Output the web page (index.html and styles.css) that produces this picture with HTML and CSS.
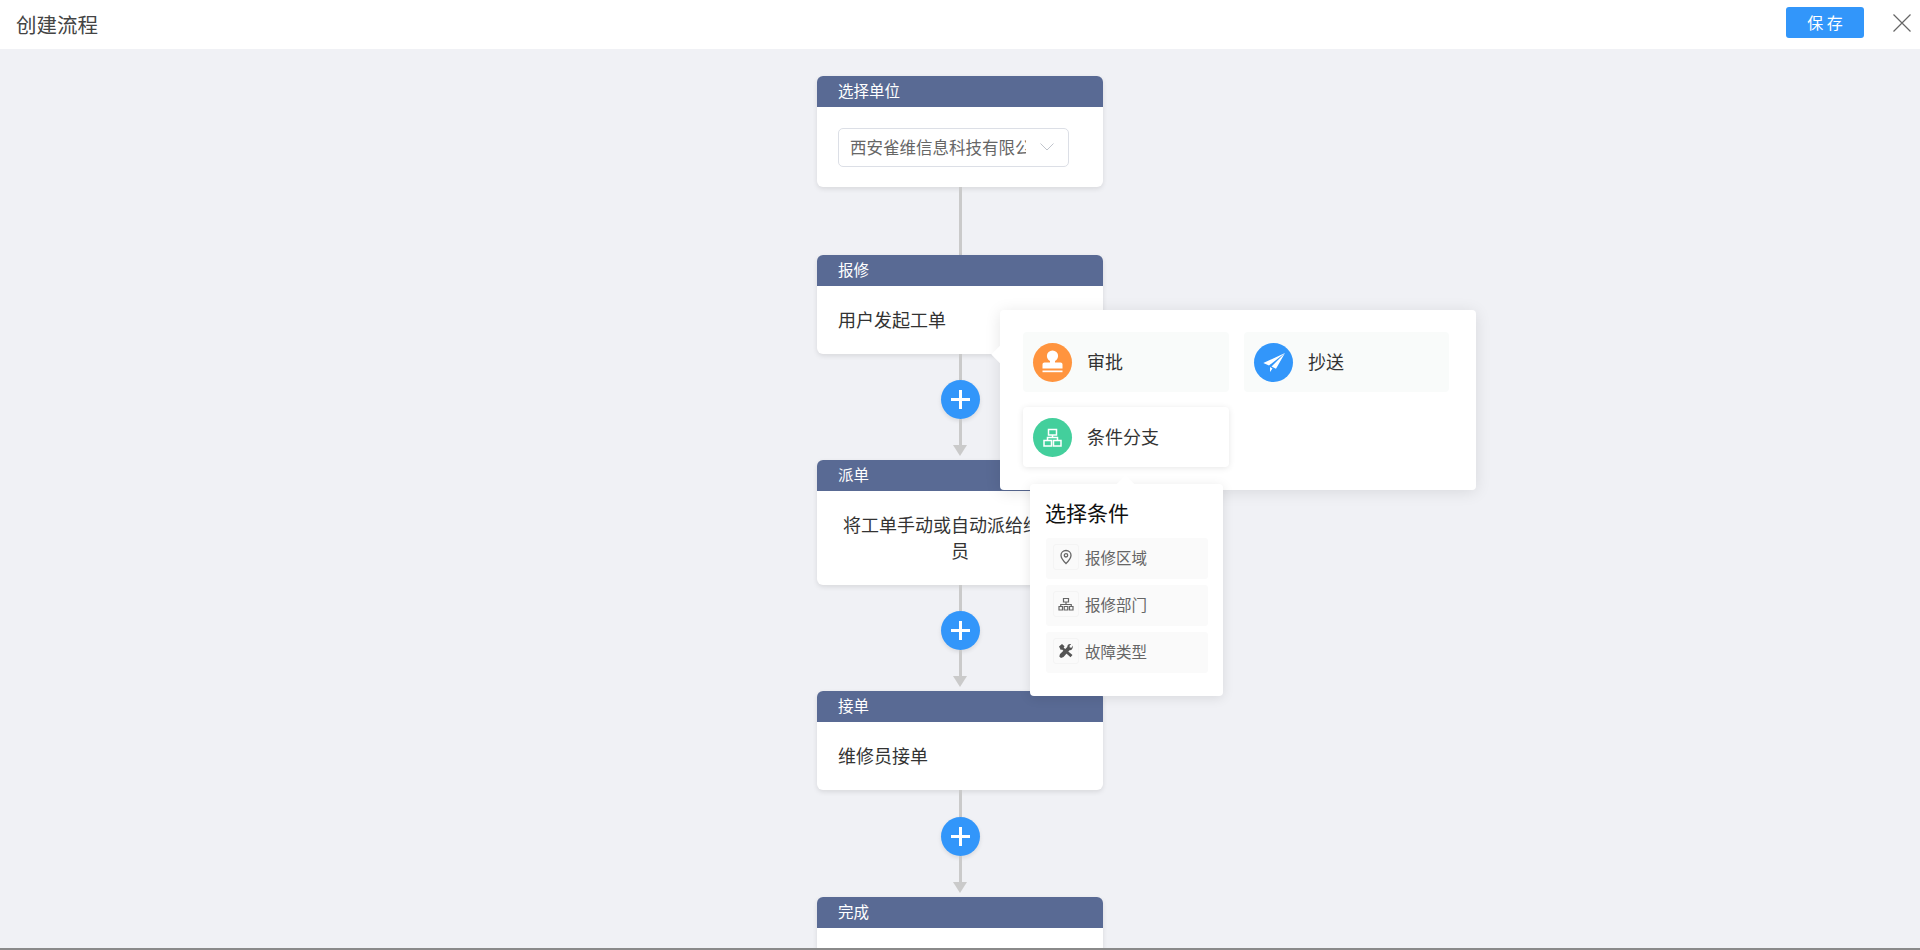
FILE: index.html
```html
<!DOCTYPE html>
<html lang="zh-CN">
<head>
  <meta charset="UTF-8" />
  <title>创建流程</title>
  <link rel="stylesheet" href="styles.css">
</head>
<body>
  <div class="topbar">
    <div class="topbar-title">创建流程</div>
    <div class="topbar-actions">
      <button class="save-btn">保 存</button>
      <svg class="close-icon" viewBox="0 0 18 18"><path d="M0.5 0.5L17.5 17.5M17.5 0.5L0.5 17.5" /></svg>
    </div>
  </div>

  <div class="flow">
    <div class="node">
      <div class="node-head">选择单位</div>
      <div class="node-body select-body">
        <div class="select">
          <span class="select-text">西安雀维信息科技有限公司</span>
          <svg class="select-arrow" viewBox="0 0 14 8"><path d="M0.5 0.5L7 7L13.5 0.5" /></svg>
        </div>
      </div>
    </div>
    <div class="link-plain"></div>

    <div class="node">
      <div class="node-head">报修</div>
      <div class="node-body">用户发起工单</div>
    </div>
    <div class="link">
      <div class="line line-top"></div>
      <div class="add-btn"><span class="plus"></span></div>
      <div class="line line-bottom"></div>
      <div class="arrow"></div>

      <div class="type-pop">
        <div class="type-item">
          <span class="type-icon orange">
            <svg viewBox="0 0 39 39" fill="#fff"><circle cx="19.500" cy="13" r="5.600" /><path d="M17 16h5v3.500h5.500c1.200 0 2 .8 2 2v4h-20v-4c0-1.200.8-2 2-2H17z" /><path d="M9.500 27.500h20v1.700h-20z" /></svg>
          </span>
          <span class="type-name">审批</span>
        </div>
        <div class="type-item">
          <span class="type-icon blue">
            <svg viewBox="0 0 39 39" fill="#fff"><path d="M31 10L9.300 20l5.700 2.400zM31 10L17.500 23.500l4.500 2.300zM16 24v5l2.500-3.500z" /></svg>
          </span>
          <span class="type-name">抄送</span>
        </div>
        <div class="type-item active">
          <span class="type-icon green">
            <svg viewBox="0 0 39 39" fill="none" stroke="#fff" stroke-width="1.500"><path d="M15.500 11.500h8V17h-8zM11 22.500h7.500V28H11zM20.500 22.500H28V28h-7.500zM19.500 17v2.500M14.500 22.500v-3h10v3" /></svg>
          </span>
          <span class="type-name">条件分支</span>

          <div class="cond-pop">
            <div class="cond-title">选择条件</div>
            <div class="cond-item">
              <span class="cond-icon">
                <svg viewBox="0 0 16 16" fill="none" stroke="#666" stroke-width="1.300"><path d="M8 1.500c-2.900 0-5 2.100-5 4.800 0 3.200 3.300 6.600 5 8.200 1.700-1.600 5-5 5-8.200 0-2.700-2.100-4.800-5-4.800z" /><circle cx="8" cy="6.300" r="1.700" /></svg>
              </span>
              <span>报修区域</span>
            </div>
            <div class="cond-item">
              <span class="cond-icon">
                <svg viewBox="0 0 16 16" fill="none" stroke="#666" stroke-width="1.200"><path d="M5.500 2.500h5V6h-5zM1 10.500h3.500V14H1zM6.250 10.500h3.500V14h-3.500zM11.500 10.500H15V14h-3.500zM8 6v2.500M2.750 10.500V8.500h10.500v2" /></svg>
              </span>
              <span>报修部门</span>
            </div>
            <div class="cond-item">
              <span class="cond-icon">
                <svg viewBox="0 0 16 16" fill="#555"><path d="M1 3.500L4 1l2.500 2.200-.8 1.500 8.800 7.300-2 2.300L4 6.500l-1.200.5z" /><path d="M14.800 2.500l-1.300 2.200-1.700-.3-.3-1.700 1.600-1.500c-2-.6-3.900.6-3.800 2.700L2 11l-.7 2.500 1.700 1.500 2.500-1 6-6.800c2.100.2 3.600-1.700 3.300-4.700z" /></svg>
              </span>
              <span>故障类型</span>
            </div>
          </div>
        </div>
      </div>
    </div>

    <div class="node">
      <div class="node-head">派单</div>
      <div class="node-body center">将工单手动或自动派给维修人员</div>
    </div>
    <div class="link">
      <div class="line line-top"></div>
      <div class="add-btn"><span class="plus"></span></div>
      <div class="line line-bottom"></div>
      <div class="arrow"></div>
    </div>

    <div class="node">
      <div class="node-head">接单</div>
      <div class="node-body">维修员接单</div>
    </div>
    <div class="link link-tall">
      <div class="line line-top"></div>
      <div class="add-btn"><span class="plus"></span></div>
      <div class="line line-bottom"></div>
      <div class="arrow"></div>
    </div>

    <div class="node">
      <div class="node-head">完成</div>
      <div class="node-body">&nbsp;</div>
    </div>
  </div>
  <div class="page-edge"></div>
</body>
</html>
```

FILE: styles.css
```css
:root {
  --bg: #f0f1f5;
  --head: #596a94;
  --blue: #3296fa;
  --line: #cacaca;
  --font: 'Noto Sans CJK SC', 'Noto Sans', sans-serif;
}

* {
  box-sizing: border-box;
}

html, body {
  height: 100%;
}

body {
  margin: 0;
  display: flex;
  flex-direction: column;
  overflow: hidden;
  font-family: var(--font);
  background: var(--bg);
  color: #333;
}

.topbar {
  flex: none;
  height: 49px;
  display: flex;
  align-items: center;
  justify-content: space-between;
  padding: 0 9px 4px 16px;
  background: #fff;
}

.topbar-title {
  margin-top: 2px;
  font-size: 20.500px;
  color: #444;
}

.topbar-actions {
  display: flex;
  align-items: center;
  gap: 29px;
}

.save-btn {
  width: 78px;
  height: 31px;
  padding: 0 0 1px;
  border: none;
  border-radius: 3px;
  background: var(--blue);
  color: #fff;
  font-family: var(--font);
  font-size: 16px;
}

.close-icon {
  width: 18px;
  height: 18px;
  fill: none;
  stroke: #666;
  stroke-width: 1.200;
}

.flow {
  flex: 1;
  min-height: 0;
  overflow: hidden;
  display: flex;
  flex-direction: column;
  align-items: center;
  padding-top: 27px;
}

.node {
  flex: none;
  width: 286px;
  border-radius: 6px;
  background: #fff;
  box-shadow: 0 2px 5px rgba(0, 0, 0, 0.1);
}

.node-head {
  height: 31px;
  padding-left: 21px;
  border-radius: 6px 6px 0 0;
  background: var(--head);
  color: #fff;
  font-size: 15.500px;
  line-height: 29px;
}

.node-body {
  padding: 20px 21px 22px;
  font-size: 18px;
  line-height: 26px;
  color: #333;
}

.node-body.center {
  text-align: center;
}

.select-body {
  padding: 21px 21px 20px;
}

.select {
  width: 231px;
  height: 39px;
  display: flex;
  align-items: center;
  padding: 0 14px 2px 11px;
  border: 1px solid #dcdfe6;
  border-radius: 5px;
  color: #666;
  font-size: 16.500px;
}

.select-text {
  width: 176px;
  overflow: hidden;
  white-space: nowrap;
}

.select-arrow {
  width: 14px;
  height: 8px;
  margin-left: auto;
  fill: none;
  stroke: #c0c4cc;
  stroke-width: 1;
}

.link-plain {
  flex: none;
  width: 3px;
  height: 68px;
  background: var(--line);
}

.link {
  flex: none;
  position: relative;
  width: 286px;
  height: 106px;
  display: flex;
  flex-direction: column;
  align-items: center;
}

.link-tall {
  height: 107px;
}

.line {
  width: 3px;
  background: var(--line);
}

.line-top {
  height: 25.500px;
}

.link-tall .line-top {
  height: 26.500px;
}

.line-bottom {
  height: 26.500px;
}

.arrow {
  width: 0;
  height: 0;
  border-top: 11px solid var(--line);
  border-left: 7.500px solid transparent;
  border-right: 7.500px solid transparent;
}

.add-btn {
  width: 39px;
  height: 39px;
  display: flex;
  align-items: center;
  justify-content: center;
  border-radius: 50%;
  background: var(--blue);
  box-shadow: 0 2px 4px rgba(0, 0, 0, 0.1);
}

.plus {
  position: relative;
  width: 19px;
  height: 3px;
  background: #fff;
}

.plus::after {
  content: "";
  position: absolute;
  left: 8px;
  top: -8px;
  width: 3px;
  height: 19px;
  background: #fff;
}

/* node type popover, opened from the first add button */
.type-pop {
  position: absolute;
  z-index: 10;
  left: 183px;
  top: -44px;
  width: 476px;
  height: 180px;
  display: grid;
  grid-template-columns: 206px 205px;
  grid-template-rows: 60px 60px;
  gap: 15px 15px;
  padding: 22px 23px;
  border-radius: 4px;
  background: #fff;
  box-shadow: 0 2px 16px rgba(0, 0, 0, 0.1);
}

.type-pop::before {
  content: "";
  position: absolute;
  left: -6px;
  top: 38px;
  width: 13px;
  height: 13px;
  background: #fff;
  transform: rotate(45deg);
}

.type-item {
  position: relative;
  display: flex;
  align-items: center;
  padding-left: 10px;
  border-radius: 4px;
  background: #f9fbfa;
}

.type-item.active {
  background: #fff;
  box-shadow: 0 1px 6px rgba(0, 0, 0, 0.1);
}

.type-icon {
  width: 39px;
  height: 39px;
  border-radius: 50%;
}

.type-icon svg {
  display: block;
  width: 39px;
  height: 39px;
}

.orange {
  background: #ff943e;
}

.blue {
  background: var(--blue);
}

.green {
  background: #43cf9c;
}

.type-name {
  margin-left: 15px;
  padding-bottom: 2px;
  font-size: 18px;
  color: #333;
}

.cond-pop {
  position: absolute;
  z-index: 11;
  left: 7px;
  top: 77px;
  width: 193px;
  height: 212px;
  padding: 16px 15.500px 16px 16px;
  border-radius: 4px;
  background: #fff;
  box-shadow: 0 2px 12px rgba(0, 0, 0, 0.1);
}

.cond-pop::before {
  content: "";
  position: absolute;
  left: 89px;
  top: -6px;
  width: 13px;
  height: 13px;
  background: #fff;
  transform: rotate(45deg);
}

.cond-title {
  height: 38px;
  margin-left: -1px;
  font-size: 21px;
  line-height: 25px;
  color: #111;
}

.cond-item {
  height: 40.500px;
  display: flex;
  align-items: center;
  gap: 6px;
  margin-bottom: 6.500px;
  padding: 0 0 2px 7px;
  border-radius: 3px;
  background: #fafafa;
  color: #666;
  font-size: 15.500px;
}

.cond-icon {
  width: 26px;
  height: 26px;
  display: flex;
  align-items: center;
  justify-content: center;
  border-radius: 3px;
  border: 1px solid #f4f4f4;
}

.cond-icon svg {
  width: 16px;
  height: 16px;
}

.page-edge {
  flex: none;
  height: 2px;
  background: #8a8a8a;
}
```
